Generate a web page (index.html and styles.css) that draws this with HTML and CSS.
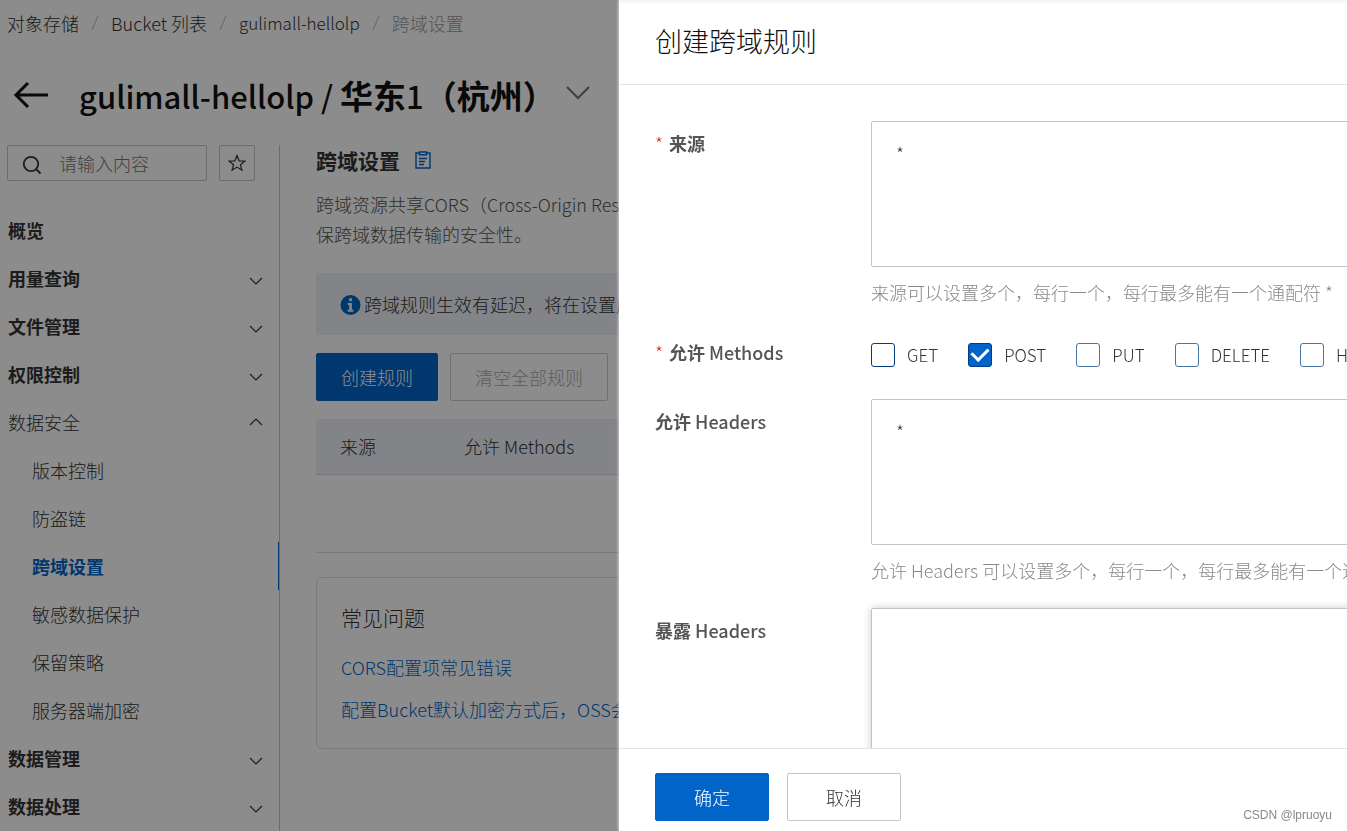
FILE: index.html
```html
<!DOCTYPE html>
<html lang="zh-CN">
<head>
<meta charset="utf-8">
<meta name="viewport" content="width=device-width, initial-scale=1">
<title>跨域设置</title>
<link rel="stylesheet" href="styles.css">
</head>
<body>
<svg class="sprite" aria-hidden="true">
  <symbol id="chevron" viewBox="0 0 14 8"><path d="M1 1l6 6 6-6" fill="none" stroke="currentColor" stroke-width="1.2"/></symbol>
</svg>
<div class="page">
  <nav class="breadcrumb" aria-label="路径">
    <a href="#">对象存储</a>
    <svg class="slash" viewBox="0 0 8 16"><path d="M7 1L1 15" stroke="currentColor" fill="none"/></svg>
    <a href="#">Bucket 列表</a>
    <svg class="slash" viewBox="0 0 8 16"><path d="M7 1L1 15" stroke="currentColor" fill="none"/></svg>
    <a class="latin" href="#">gulimall-hellolp</a>
    <svg class="slash" viewBox="0 0 8 16"><path d="M7 1L1 15" stroke="currentColor" fill="none"/></svg>
    <span class="current">跨域设置</span>
  </nav>
  <header class="title-bar">
    <button class="back" type="button" aria-label="返回">
      <svg viewBox="0 0 36 28"><path d="M15 2L3 14l12 12M3 14h32" fill="none" stroke="currentColor" stroke-width="3"/></svg>
    </button>
    <h1>gulimall-hellolp / <b>华东</b>1<b>（杭州）</b></h1>
    <button class="region" type="button" aria-label="切换">
      <svg viewBox="0 0 24 14"><path d="M1 1l11 11L23 1" fill="none" stroke="currentColor" stroke-width="2.2"/></svg>
    </button>
  </header>
  <div class="columns">
    <aside class="sidebar">
      <div class="search-row">
        <label class="search">
          <svg viewBox="0 0 20 20"><g fill="none" stroke="currentColor" stroke-width="1.8"><circle cx="9" cy="9" r="7.2"/><path d="M14 14l4.500 4.500"/></g></svg>
          <input type="text" placeholder="请输入内容" aria-label="请输入内容">
        </label>
        <button class="star" type="button" aria-label="收藏">
          <svg viewBox="0 0 18 18"><path d="M9 1.500l2.100 5.300 5.700.3-4.400 3.600 1.500 5.500L9 13.100l-4.900 3.100 1.500-5.500L1.200 7.100l5.700-.3z" fill="none" stroke="currentColor" stroke-width="1.200"/></svg>
        </button>
      </div>
      <ul class="menu">
        <li><a class="group" href="#">概览</a></li>
        <li><button class="group" type="button">用量查询<svg><use href="#chevron"/></svg></button></li>
        <li><button class="group" type="button">文件管理<svg><use href="#chevron"/></svg></button></li>
        <li><button class="group" type="button">权限控制<svg><use href="#chevron"/></svg></button></li>
        <li><button class="group open" type="button">数据安全<svg><use href="#chevron"/></svg></button>
          <ul class="submenu">
            <li><a href="#">版本控制</a></li>
            <li><a href="#">防盗链</a></li>
            <li><a class="active" href="#">跨域设置</a></li>
            <li><a href="#">敏感数据保护</a></li>
            <li><a href="#">保留策略</a></li>
            <li><a href="#">服务器端加密</a></li>
          </ul>
        </li>
        <li><button class="group" type="button">数据管理<svg><use href="#chevron"/></svg></button></li>
        <li><button class="group" type="button">数据处理<svg><use href="#chevron"/></svg></button></li>
      </ul>
    </aside>
    <main class="content">
      <h2>跨域设置
        <svg viewBox="0 0 16 18"><g fill="none" stroke="currentColor" stroke-width="1.400"><path d="M4 2H1v15h14V2h-3"/><path d="M4.500 1h7v2.700h-7z"/><path d="M4 7.500h8M4 10.500h6M4 13.500h5"/></g></svg>
      </h2>
      <p class="intro">跨域资源共享CORS（Cross-Origin Resource Sharing）<br>保跨域数据传输的安全性。</p>
      <div class="notice">
        <svg viewBox="0 0 22 22"><circle cx="11" cy="11" r="10.500" fill="#0064c8"/><path d="M9.500 4h3v3h-3zM8 9h4.500v7H14v2H8v-2h1.500v-5H8z" fill="#eff1f8"/></svg>
        <span>跨域规则生效有延迟，将在设置成功后生效</span>
      </div>
      <div class="actions">
        <button class="btn primary" type="button">创建规则</button>
        <button class="btn disabled" type="button" disabled>清空全部规则</button>
      </div>
      <table class="rules">
        <thead><tr><th class="origin">来源</th><th>允许 Methods</th></tr></thead>
        <tbody><tr><td colspan="2"></td></tr></tbody>
      </table>
      <section class="faq">
        <h3>常见问题</h3>
        <a href="#">CORS配置项常见错误</a>
        <a href="#">配置Bucket默认加密方式后，OSS会对历史文件进行加密吗？</a>
      </section>
    </main>
  </div>
</div>
<div class="mask"></div>
<form class="drawer" aria-labelledby="drawer-title">
  <header><h2 id="drawer-title">创建跨域规则</h2></header>
  <div class="fields">
    <div class="field">
      <label class="name" for="origin"><i>*</i><b>来源</b></label>
      <div class="control">
        <textarea id="origin">*</textarea>
        <p>来源可以设置多个，每行一个，每行最多能有一个通配符 *</p>
      </div>
    </div>
    <div class="field" role="group" aria-labelledby="methods">
      <span class="name" id="methods"><i>*</i><b>允许</b> Methods</span>
      <div class="control checks">
        <label><input class="strong" type="checkbox">GET</label>
        <label><input class="strong" type="checkbox" checked>POST</label>
        <label><input type="checkbox">PUT</label>
        <label><input type="checkbox">DELETE</label>
        <label><input type="checkbox">HEAD</label>
      </div>
    </div>
    <div class="field">
      <label class="name" for="allow"><b>允许</b> Headers</label>
      <div class="control">
        <textarea id="allow">*</textarea>
        <p>允许 Headers 可以设置多个，每行一个，每行最多能有一个通配符 *</p>
      </div>
    </div>
    <div class="field">
      <label class="name" for="expose"><b>暴露</b> Headers</label>
      <div class="control"><textarea class="raised" id="expose"></textarea></div>
    </div>
  </div>
  <footer>
    <button class="btn primary" type="button">确定</button>
    <button class="btn" type="button">取消</button>
    <small>CSDN @lpruoyu</small>
  </footer>
</form>
</body>
</html>
```

FILE: styles.css
```css
* { box-sizing: border-box; }
body {
  margin: 0;
  height: 100vh;
  overflow: hidden;
  background: #fff;
  color: #333;
  font: 300 18px/26px "Noto Sans CJK SC", sans-serif;
}
h1, h2, h3, p, ul { margin: 0; padding: 0; font-weight: inherit; }
ul { list-style: none; }
a { color: inherit; text-decoration: none; }
button, input, textarea { font: inherit; color: inherit; }
button { padding: 0; border: 0; background: none; }
svg { flex: none; }
.sprite { display: none; }

.page {
  display: flex;
  flex-direction: column;
  height: 100vh;
  overflow: hidden;
  white-space: nowrap;
}
.breadcrumb {
  display: flex;
  align-items: center;
  gap: 12px;
  height: 45px;
  padding-left: 7px;
}
.latin { font-size: 17px; }
.slash { width: 8px; height: 16px; color: #bbb; }
.current { color: #999; }

.title-bar {
  display: flex;
  align-items: center;
  height: 100px;
  padding-left: 13px;
  color: #111;
}
.back { display: flex; width: 66px; }
.back svg { width: 36px; height: 28px; }
h1 { font-size: 31px; line-height: 48px; font-weight: 500; }
h1 b { font-size: 33px; font-weight: 700; }
.region { display: flex; margin: 0 0 4px 10px; color: #777; }
.region svg { width: 24px; height: 14px; }

.columns { display: flex; flex: 1; min-height: 0; }
.sidebar { width: 280px; border-right: 1px solid #c0c6cc; }
.search-row { display: flex; gap: 12px; padding: 0 24px 25px 7px; }
.search {
  display: flex;
  flex: 1;
  align-items: center;
  gap: 17px;
  min-width: 0;
  height: 36px;
  padding-left: 14px;
  border: 1px solid #c0c6cc;
  border-radius: 2px;
}
.search svg { width: 20px; height: 20px; margin-top: 4px; }
.search input { width: 100%; min-width: 0; padding: 0; border: 0; outline: 0; background: none; }
.search input::placeholder { color: #777; }
.star {
  display: grid;
  place-items: center;
  width: 36px;
  height: 36px;
  border: 1px solid #c0c6cc;
  border-radius: 2px;
}
.star svg { width: 18px; height: 18px; }
.group {
  display: flex;
  align-items: center;
  justify-content: space-between;
  width: 100%;
  height: 48px;
  padding: 0 16px 0 8px;
  font-weight: 700;
}
.group svg { width: 14px; height: 8px; margin-top: 5px; }
.group.open { font-weight: inherit; }
.group.open svg { margin-top: 0; transform: scaleY(-1); }
.submenu a { display: block; padding-left: 32px; line-height: 48px; }
.submenu .active { border-right: 1px solid #0064c8; color: #0064c8; font-weight: 700; }

.content { flex: 1; min-width: 0; padding-left: 36px; }
.content h2 {
  display: flex;
  align-items: center;
  gap: 15px;
  font-size: 21px;
  line-height: 30px;
  font-weight: 700;
}
.content h2 svg { width: 16px; height: 18px; color: #0064c8; }
.intro { padding: 14px 0 24px; line-height: 30px; color: #555; }
.notice {
  display: flex;
  align-items: center;
  gap: 3px;
  height: 62px;
  padding-left: 24px;
  background: #eff1f8;
  border-radius: 3px;
}
.notice svg { width: 21px; height: 22px; margin-top: 2px; }
.actions { display: flex; gap: 12px; padding: 18px 0; }
.btn {
  height: 48px;
  padding: 0 38px;
  border: 1px solid #c0c6cc;
  border-radius: 2px;
  background: #fff;
}
.btn.primary { border-color: #0064c8; background: #0064c8; color: #fff; }
.actions .btn { padding: 0 24px; }
.btn.disabled { border-color: #ccc; color: #aaa; }
.rules { width: 100%; border-collapse: collapse; table-layout: fixed; }
.rules th {
  height: 55px;
  padding: 0 0 0 24px;
  border-bottom: 1px solid #d8dae0;
  background: #eff1f8;
  font-weight: inherit;
  text-align: left;
}
.rules .origin { width: 124px; }
.rules td { height: 78px; padding: 0; border-bottom: 1px solid #dedede; }
.faq {
  display: flex;
  flex-direction: column;
  gap: 16px;
  margin-top: 24px;
  padding: 24px;
  border: 1px solid #dedede;
  border-radius: 6px;
}
.faq h3 { padding-bottom: 6px; font-size: 21px; line-height: 30px; }
.faq a { color: #0064c8; }
.faq a:last-child { padding-bottom: 2px; }

.mask { position: fixed; inset: 0; background: rgba(0, 0, 0, .45); }
.drawer {
  position: fixed;
  inset: 0 0 0 619px;
  display: flex;
  flex-direction: column;
  background: #fff;
  box-shadow: 0 0 3px #fff;
  white-space: nowrap;
}
.drawer > header {
  padding: 21px 36px 23px;
  border-bottom: 1px solid #e5e5e5;
  background: linear-gradient(#f3f3f3, #fff 4px);
}
.drawer h2 { font-size: 27px; line-height: 40px; color: #111; }
.fields {
  display: flex;
  flex: 1;
  flex-direction: column;
  gap: 24px;
  min-height: 0;
  padding: 36px 0 0 36px;
  overflow: hidden;
}
.field { display: flex; flex: none; }
.name { flex: none; width: 216px; line-height: 45px; color: #555; font-weight: 500; }
.name b { font-weight: 700; }
.name i { margin-right: 6px; color: #e02020; font-style: normal; font-weight: 300; }
.control { flex: none; width: 100%; }
textarea {
  display: block;
  width: 100%;
  height: 146px;
  padding: 18px 24px;
  border: 1px solid #c0c3cc;
  border-radius: 2px;
  resize: none;
}
.raised { box-shadow: 0 0 8px rgba(0, 0, 0, .2); }
.control p { padding: 12px 0 1px; color: #888; }
.checks { display: flex; align-items: center; gap: 30px; height: 45px; padding-top: 5px; font-size: 17px; }
.checks label { display: flex; align-items: center; gap: 12px; }
.checks input {
  appearance: none;
  display: grid;
  place-items: center;
  width: 24px;
  height: 24px;
  margin: 0;
  border: 1px solid #4c74a3;
  border-radius: 3px;
}
.checks .strong { border-color: #003c80; }
.checks input:checked { background: #0064c8; }
.checks input:checked::before {
  content: "";
  width: 13px;
  height: 8px;
  margin-bottom: 5px;
  border: solid #fff;
  border-width: 0 0 3px 3px;
  transform: rotate(-45deg);
}
.drawer > footer {
  display: flex;
  gap: 18px;
  padding: 24px 15px 10px 36px;
  border-top: 1px solid #e5e5e5;
}
footer small {
  align-self: flex-end;
  margin-left: auto;
  color: #888;
  font: 12px/12px "Liberation Sans", Arial, sans-serif;
}
```
